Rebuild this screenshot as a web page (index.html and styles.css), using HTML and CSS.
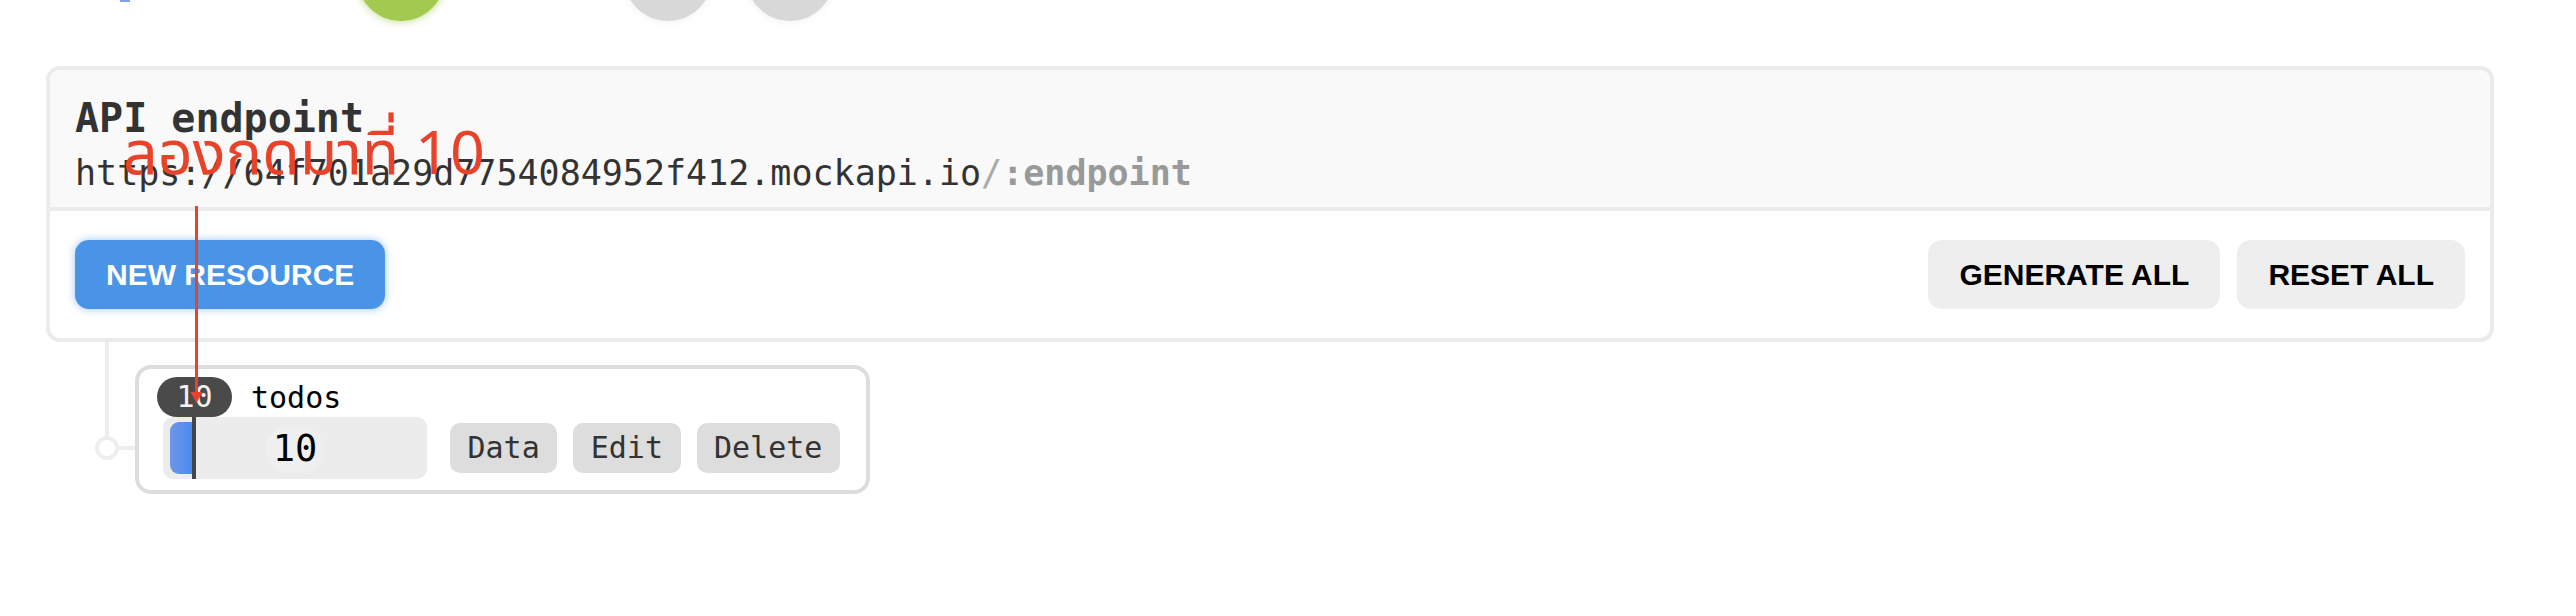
FILE: index.html
```html
<!DOCTYPE html>
<html lang="en">
<head>
<meta charset="utf-8">
<title>mockapi resources</title>
<link rel="stylesheet" href="styles.css">
</head>
<body>
<div class="page">
  <div class="topbar">
    <span class="logo-tail"></span>
    <span class="step step-done"></span>
    <span class="step step-todo step-second"></span>
    <span class="step step-todo step-third"></span>
  </div>

  <section class="card">
    <div class="card-head">
      <div class="card-title">API endpoint</div>
      <div class="card-url">https://64f701a29d7754084952f412.mockapi.io<span class="url-slash">/</span><span class="url-param">:endpoint</span></div>
    </div>
    <div class="card-foot">
      <button class="btn btn-primary">NEW RESOURCE</button>
      <div class="foot-right">
        <button class="btn btn-light">GENERATE ALL</button>
        <button class="btn btn-light">RESET ALL</button>
      </div>
    </div>
  </section>

  <div class="tree">
    <div class="connector">
      <span class="conn-v"></span>
      <div class="conn-row">
        <span class="conn-dot"></span>
        <span class="conn-h"></span>
      </div>
    </div>
    <div class="resource">
      <div class="res-head">
        <span class="count-badge">10</span>
        <span class="res-name">todos</span>
      </div>
      <div class="res-body">
        <div class="slider">
          <span class="slider-fill" style="width: 23px"></span>
          <span class="slider-thumb"></span>
          <span class="slider-value">10</span>
        </div>
        <div class="res-actions">
          <button class="chip">Data</button>
          <button class="chip">Edit</button>
          <button class="chip">Delete</button>
        </div>
      </div>
    </div>
  </div>

  <div class="note">ลองกดมาที่ 10</div>
  <svg class="note-arrow" width="14" height="200" viewBox="0 0 14 200" aria-hidden="true">
    <line x1="6.5" y1="0" x2="6.5" y2="188" stroke="#e8432a" stroke-width="3"/>
    <polygon points="0.5,186 12.5,186 6.5,197" fill="#e8432a"/>
  </svg>
</div>
</body>
</html>
```

FILE: styles.css
```css
html, body {
  margin: 0;
  padding: 0;
  background: #ffffff;
}

.page {
  position: relative;
  width: 2576px;
  min-height: 616px;
  font-family: "DejaVu Sans Mono", "Liberation Mono", monospace;
  color: #333333;
}

/* top stepper (only its lower edge is visible) */
.topbar {
  height: 21px;
  display: flex;
  align-items: flex-end;
}

.logo-tail {
  align-self: flex-start;
  margin-left: 120px;
  width: 10px;
  height: 2px;
  background: #7ea2f2;
}

.step {
  flex: none;
  width: 88px;
  height: 88px;
  border-radius: 50%;
}

.step-done {
  margin-left: 227px;
  background: #a4c951;
  box-shadow: 0 0 9px rgba(150, 200, 60, 0.7);
}

.step-todo {
  background: #d8d8d8;
  box-shadow: 0 0 9px rgba(0, 0, 0, 0.07);
}

.step-second { margin-left: 179px; }
.step-third { margin-left: 34px; }

/* API endpoint card */
.card {
  margin: 45px 0 0 46px;
  width: 2448px;
  box-sizing: border-box;
  border: 4px solid #ebebeb;
  border-radius: 14px;
  overflow: hidden;
  background: #ffffff;
}

.card-head {
  background: #f9f9f9;
  border-bottom: 4px solid #ebebeb;
  padding: 26px 25px 13px;
}

.card-title {
  font-weight: bold;
  font-size: 40px;
  line-height: 45px;
  color: #333333;
}

.card-url {
  margin-top: 12px;
  font-size: 35px;
  line-height: 41px;
  color: #333333;
}

.url-slash { color: #aaaaaa; }
.url-param { color: #999999; font-weight: bold; }

.card-foot {
  display: flex;
  justify-content: space-between;
  padding: 29px 25px 29px 25px;
}

.foot-right {
  display: flex;
  gap: 17px;
}

.btn {
  border: none;
  margin: 0;
  font-family: "Liberation Sans", Arial, sans-serif;
  font-weight: bold;
  font-size: 30px;
  line-height: 35px;
  padding: 17px 31px;
  border-radius: 14px;
  cursor: pointer;
}

.btn-primary {
  background: #4a94e8;
  color: #ffffff;
  box-shadow: 0 0 8px rgba(74, 148, 232, 0.55);
}

.btn-light {
  background: #eeeeee;
  color: #000000;
}

/* resource tree */
.tree {
  display: flex;
  margin-left: 95px;
}

.connector {
  width: 40px;
  display: flex;
  flex-direction: column;
}

.conn-v {
  display: block;
  margin-left: 10px;
  width: 4px;
  height: 94px;
  background: #eeeeee;
}

.conn-row {
  display: flex;
  align-items: center;
}

.conn-dot {
  flex: none;
  width: 24px;
  height: 24px;
  box-sizing: border-box;
  border: 4px solid #eeeeee;
  border-radius: 50%;
  background: #ffffff;
}

.conn-h {
  flex: 1;
  height: 4px;
  background: #eeeeee;
}

.resource {
  margin-top: 23px;
  width: 735px;
  height: 129px;
  box-sizing: border-box;
  border: 4px solid #dddddd;
  border-radius: 16px;
  padding: 8px 24px 11px 24px;
  display: flex;
  flex-direction: column;
}

.res-head {
  display: flex;
  align-items: center;
  margin-left: -6px;
  height: 40px;
}

.count-badge {
  width: 75px;
  height: 40px;
  border-radius: 20px;
  background: #4a4a4a;
  color: #f2f2f2;
  font-size: 30px;
  line-height: 40px;
  text-align: center;
}

.res-name {
  margin-left: 19px;
  font-size: 30px;
  line-height: 34px;
  color: #000000;
  margin-top: 1px;
}

.res-body {
  display: flex;
  align-items: center;
}

.slider {
  position: relative;
  width: 264px;
  height: 62px;
  border-radius: 10px;
  background: #ececec;
  display: flex;
  align-items: center;
  justify-content: center;
}

.slider-fill {
  position: absolute;
  left: 7px;
  top: 5px;
  bottom: 5px;
  border-radius: 9px 0 0 9px;
  background: linear-gradient(90deg, #6d96e6, #4a8af1);
}

.slider-thumb {
  position: absolute;
  left: 29px;
  top: 0;
  bottom: 0;
  width: 4px;
  background: #454545;
}

.slider-value {
  font-size: 37px;
  line-height: 48px;
  color: #000000;
  padding: 0 7px;
  border-radius: 24px;
  background: #efefef;
  margin-top: 2px;
}

.res-actions {
  display: flex;
  gap: 16px;
  margin-left: 23px;
}

.chip {
  border: none;
  margin: 0;
  height: 50px;
  padding: 0 17.5px;
  border-radius: 10px;
  background: #dddddd;
  color: #333333;
  font-family: "DejaVu Sans Mono", "Liberation Mono", monospace;
  font-size: 30px;
  line-height: 50px;
  cursor: pointer;
}

/* red annotation drawn over the screenshot */
.note {
  position: absolute;
  left: 123px;
  top: 115px;
  font-family: "Noto Sans Thai", "Noto Sans", "DejaVu Sans", sans-serif;
  font-size: 61px;
  line-height: 80px;
  color: #e8432a;
  white-space: nowrap;
}

.note-arrow {
  position: absolute;
  left: 190px;
  top: 206px;
}
```
